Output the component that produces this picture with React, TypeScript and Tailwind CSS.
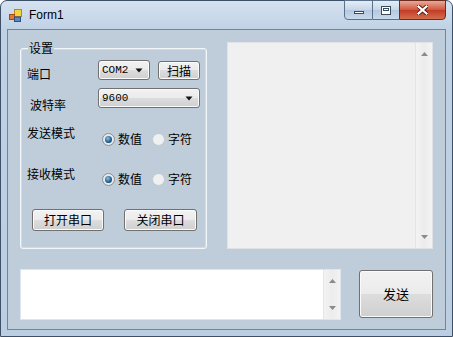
import React from 'react';

const cjk = { fontFamily: '"Noto Sans CJK SC", "Noto Sans", sans-serif' };

const btn =
  'flex items-center rounded-[3px] border border-[#707070] bg-[linear-gradient(#f2f2f2,#ebebeb_50%,#dddddd_50%,#cfcfcf)] shadow-[inset_0_0_0_1px_#fbfbfb] text-[12px] leading-[14px] text-black';

const Arrow = () => (
  <svg width="8" height="5" viewBox="0 0 8 5" className="shrink-0">
    <path d="M0.5 0.5 L7.5 0.5 L4 4.5 Z" fill="#111" />
  </svg>
);

const Combo = ({ value, w }: { value: string; w: string }) => (
  <div className={`${btn} ${w} h-[20px] justify-between pl-[3px] pr-[6px]`}>
    <span className="text-[11px]" style={{ fontFamily: '"Liberation Mono", monospace' }}>
      {value}
    </span>
    <Arrow />
  </div>
);

const Radio = ({ checked, label }: { checked?: boolean; label: string }) => (
  <div className="flex w-[50px] items-center gap-[3px]">
    <span
      className={`flex h-[13px] w-[13px] shrink-0 items-center justify-center rounded-full border ${
        checked ? 'border-[#8a8f95] bg-[#e6e9ec]' : 'border-[#c4c8cc] bg-[#eef0f2]'
      }`}
    >
      {checked && (
        <span className="h-[7px] w-[7px] rounded-full bg-[radial-gradient(circle_at_40%_35%,#8fc0e6,#1c5a8a_60%,#13395b)]" />
      )}
    </span>
    <span className="text-[12px] leading-[14px]">{label}</span>
  </div>
);

const ScrollBar = ({ up, down }: { up: string; down: string }) => (
  <div className="flex w-[17px] flex-col items-center justify-between border-l border-[#e4e4e4] bg-[linear-gradient(90deg,#f3f3f3,#ececec_50%,#f3f3f3)]">
    <svg width="7" height="4" viewBox="0 0 7 4" className={up}>
      <path d="M0 4 L3.5 0 L7 4 Z" fill="#8a8a8a" />
    </svg>
    <svg width="7" height="4" viewBox="0 0 7 4" className={down}>
      <path d="M0 0 L7 0 L3.5 4 Z" fill="#8a8a8a" />
    </svg>
  </div>
);

const FormIcon = () => (
  <svg width="13" height="13" viewBox="0 0 13 13">
    <rect x="5.5" y="0.5" width="7" height="7" fill="#f6d23c" stroke="#b7871a" />
    <rect x="0.5" y="5.5" width="5" height="5" fill="#e6772e" stroke="#a24a12" />
    <rect x="5.5" y="8" width="6" height="4.5" fill="#5d86c4" stroke="#2d4f84" />
  </svg>
);

export default function App() {
  return (
    <div className="h-[337px] w-[453px] overflow-hidden bg-white" style={cjk}>
      <div className="flex h-full flex-col rounded-t-[7px] border border-[#3e5068] bg-[linear-gradient(#d5e2f0,#bfd1e5_30px,#bccee2)]">
        {/* Title bar */}
        <div className="flex h-[28px] shrink-0 items-start">
          <div className="ml-[8px] mt-[8px]">
            <FormIcon />
          </div>
          <span
            className="ml-[7px] mt-[7px] text-[12px] leading-[14px] text-black"
            style={{ fontFamily: '"Liberation Sans", sans-serif' }}
          >
            Form1
          </span>
          <div className="ml-auto mr-[6px] flex h-[20px] -mt-[1px]">
            <div className="flex w-[29px] items-end justify-center rounded-bl-[4px] border border-[#5b718b] bg-[linear-gradient(#e4edf7,#c5d6e9_50%,#b4c8de_50%,#c8d9ec)] pb-[5px]">
              <span className="h-[3px] w-[10px] border border-[#3b4b5e] bg-white" />
            </div>
            <div className="flex w-[26px] items-center justify-center border-y border-[#5b718b] bg-[linear-gradient(#e4edf7,#c5d6e9_50%,#b4c8de_50%,#c8d9ec)]">
              <span className="h-[9px] w-[10px] border border-[#3b4b5e] bg-white">
                <span className="m-[1px] block h-[3px] w-[6px] border border-[#3b4b5e]" />
              </span>
            </div>
            <div className="flex w-[47px] items-center justify-center rounded-br-[4px] border border-[#6b2c22] bg-[linear-gradient(#e9a99a,#d0553d_50%,#c03a22_50%,#d66e4e)]">
              <svg width="11" height="10" viewBox="0 0 11 10">
                <path d="M1.5 1.5 L9.5 8.5 M9.5 1.5 L1.5 8.5" stroke="#4a1a12" strokeWidth="4" strokeLinecap="square" />
                <path d="M1.5 1.5 L9.5 8.5 M9.5 1.5 L1.5 8.5" stroke="#ffffff" strokeWidth="2.2" strokeLinecap="square" />
              </svg>
            </div>
          </div>
        </div>

        {/* Client area */}
        <div className="mx-[6px] h-[301px] border border-[#6f869f] bg-[#bfcddb] px-[12px] pt-[12px] text-black">
          {/* Top row */}
          <div className="flex items-start">
            {/* Group box */}
            <div className="relative mt-[6px] h-[201px] w-[187px] rounded-[3px] border border-[#f4f7fa] shadow-[inset_0_0_0_1px_#d0dae4]">
              <span className="absolute -top-[8px] left-[7px] bg-[#bfcddb] px-[1px] text-[12px] leading-[14px]">
                设置
              </span>
              <div className="flex flex-col pl-[6px] pt-[11px]">
                <div className="flex h-[28px] items-start">
                  <span className="mt-[7px] w-[71px] text-[12px] leading-[14px]">端口</span>
                  <Combo value="COM2" w="w-[52px]" />
                  <div className={`${btn} ml-[8px] mt-[1px] h-[19px] w-[42px] justify-center`}>扫描</div>
                </div>
                <div className="flex h-[30px] items-start">
                  <span className="ml-[3px] mt-[10px] w-[68px] text-[12px] leading-[14px]">波特率</span>
                  <Combo value="9600" w="w-[102px]" />
                </div>
                <div className="flex h-[40px] items-start">
                  <span className="mt-[8px] w-[75px] text-[12px] leading-[14px]">发送模式</span>
                  <div className="mt-[14px] flex">
                    <Radio checked label="数值" />
                    <Radio label="字符" />
                  </div>
                </div>
                <div className="flex h-[51px] items-start">
                  <span className="mt-[9px] w-[75px] text-[12px] leading-[14px]">接收模式</span>
                  <div className="mt-[14px] flex">
                    <Radio checked label="数值" />
                    <Radio label="字符" />
                  </div>
                </div>
                <div className="flex gap-[20px] pl-[5px]">
                  <div className={`${btn} h-[22px] w-[72px] justify-center border-[#3c7fb1] shadow-[inset_0_0_0_1px_#9fd6f5]`}>打开串口</div>
                  <div className={`${btn} h-[22px] w-[73px] justify-center`}>关闭串口</div>
                </div>
              </div>
            </div>

            {/* Receive text box */}
            <div className="ml-[20px] flex h-[207px] w-[207px] border border-[#dfe3e8] bg-[#f0f0f0]">
              <div className="flex-1" />
              <ScrollBar up="mt-[9px]" down="mb-[9px]" />
            </div>
          </div>

          {/* Bottom row */}
          <div className="mt-[20px] flex items-start">
            <div className="flex h-[51px] w-[321px] border border-[#dfe5ec] bg-white">
              <div className="flex-1" />
              <ScrollBar up="mt-[9px]" down="mb-[9px]" />
            </div>
            <div className={`${btn} ml-[18px] mt-[1px] h-[48px] w-[74px] justify-center text-[13px]`}>发送</div>
          </div>
        </div>
      </div>
    </div>
  );
}
